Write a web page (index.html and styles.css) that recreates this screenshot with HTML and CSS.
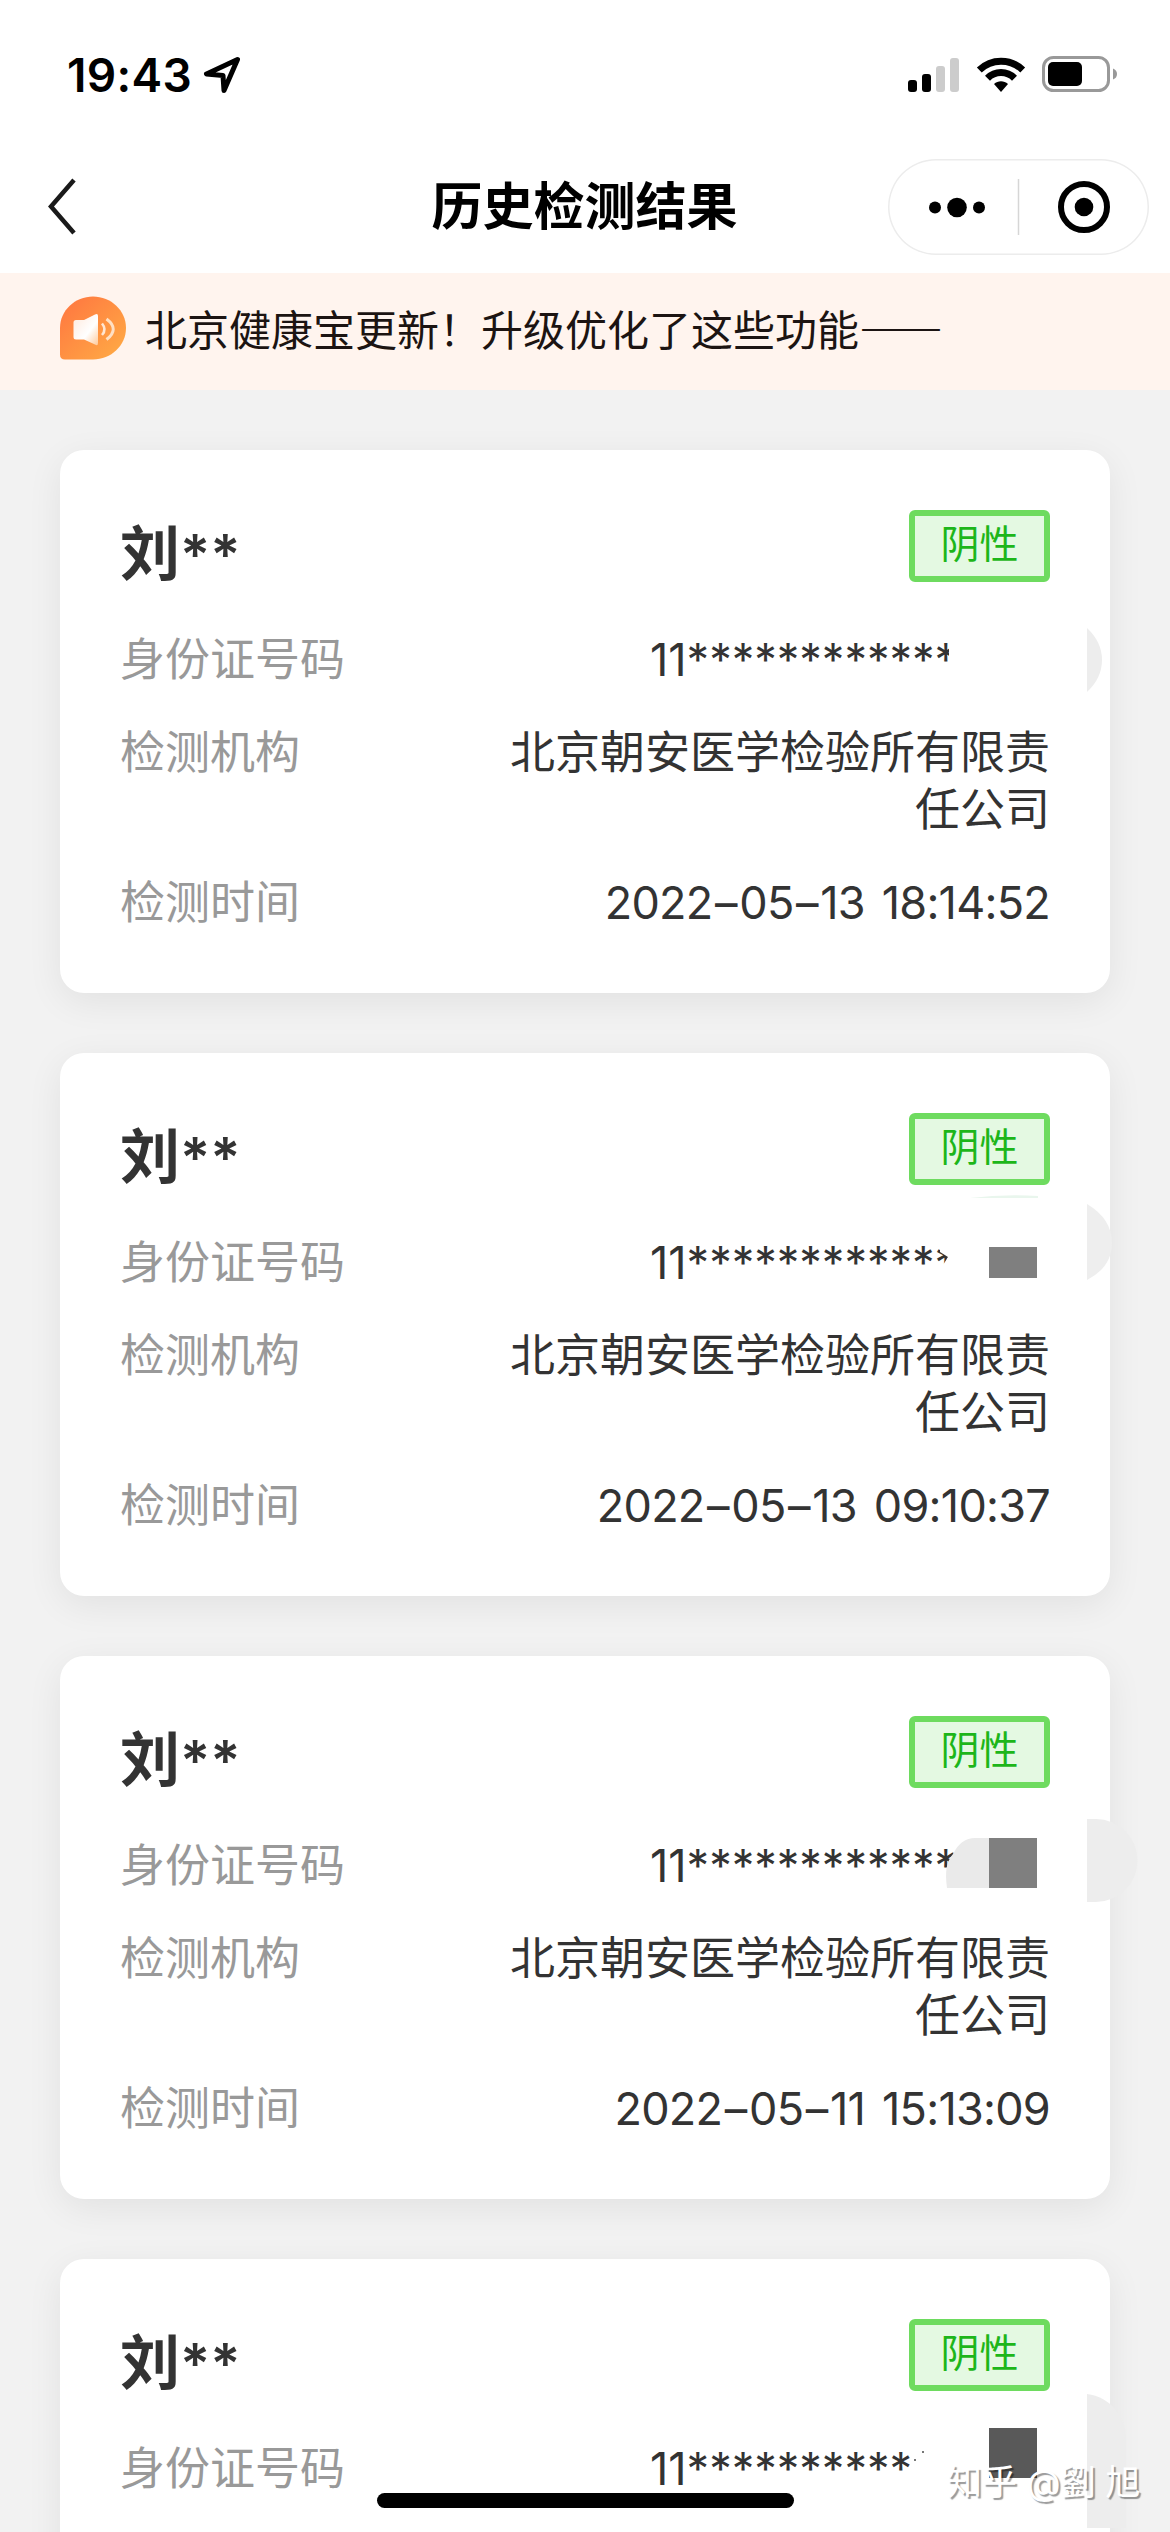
FILE: index.html
```html
<!DOCTYPE html>
<html lang="zh-CN">
<head>
<meta charset="utf-8">
<meta name="viewport" content="width=device-width">
<title>历史检测结果</title>
<link rel="stylesheet" href="styles.css">
</head>
<body>
<div class="screen">
  <div class="statusbar">
    <span class="clock">19:43</span>
    <svg class="location" width="38" height="38" viewBox="0 0 38 38"><path d="M34.5 3.5 L3.5 18 L20 19.5 L21 34.5 Z" fill="none" stroke="#000" stroke-width="5" stroke-linejoin="round"/></svg>
    <svg class="signal" width="52" height="36" viewBox="0 0 52 36"><rect x="0" y="23" width="9" height="12" rx="3"/><rect x="14" y="17" width="9" height="18" rx="3"/><rect x="28" y="9" width="9" height="26" rx="3" fill="#ccc"/><rect x="42" y="1" width="9" height="34" rx="3" fill="#ccc"/></svg>
    <svg class="wifi" width="50" height="38" viewBox="0 0 50 38"><g fill="none" stroke="#000" stroke-width="7"><path d="M3.3 14 C15.500 2.300 34.500 2.300 46.700 14"/><path d="M11.500 22.200 C19 14.600 31 14.600 38.500 22.200"/></g><path d="M18 28 C22 24.300 28 24.300 32 28 L25 36Z"/></svg>
    <svg class="battery" width="76" height="38" viewBox="0 0 76 38"><rect x="1.500" y="1.500" width="65" height="33" rx="10" fill="none" stroke="#999" stroke-width="3"/><rect x="6" y="6" width="34" height="24" rx="5"/><path d="M71 12.500 Q75 14 75 18 Q75 22 71 23.500Z" fill="#999"/></svg>
  </div>
  <header class="navbar">
    <svg class="back" width="30" height="58" viewBox="0 0 30 58"><path d="M26 2 L3 28.500 L26 55" fill="none" stroke="#1a1a1a" stroke-width="4.500"/></svg>
    <h1>历史检测结果</h1>
    <div class="capsule">
      <svg width="261" height="96" viewBox="0 0 261 96"><circle cx="47" cy="48.500" r="6"/><circle cx="69" cy="48.500" r="9.800"/><circle cx="91" cy="48.500" r="6"/><path d="M130.500 20v56" stroke="#d6d6d6" stroke-width="1.500"/><circle cx="196" cy="48" r="23" fill="none" stroke="#000" stroke-width="6"/><circle cx="196" cy="48" r="9.300"/></svg>
    </div>
  </header>
  <div class="notice">
    <svg width="66" height="64" viewBox="0 0 66 64"><defs><linearGradient id="orange" x1="0" y1="0" x2="1" y2="1"><stop offset="0" stop-color="#ff7440"/><stop offset="1" stop-color="#ffad45"/></linearGradient><linearGradient id="cone" x1="0" y1="0" x2="1" y2="1"><stop offset="0" stop-color="#ffe9dc"/><stop offset=".6" stop-color="#fff"/><stop offset="1" stop-color="#ffc999"/></linearGradient></defs><path d="M33 .500C51 .500 66 14.500 66 32S51 63.500 33 63.500H5Q0 63.500 0 58.500V32C0 14.500 15 .500 33 .500Z" fill="url(#orange)"/><path d="M16 24h8L35 18.500Q38 17 38 20V47Q38 50.500 35 48.500L24 43.500H16Q13.500 43.500 13.500 41V26.500Q13.500 24 16 24Z" fill="url(#cone)"/><path d="M42 27.500Q47 33.500 42 39" fill="none" stroke="#ffe6d2" stroke-width="2.600"/><path d="M46.500 23Q60 33 46.500 43.500" fill="none" stroke="#ffe0c4" stroke-width="3"/></svg>
    <p>北京健康宝更新！升级优化了这些功能<b>——</b></p>
  </div>
  <main class="list">
    <article class="card">
      <div class="head"><h2>刘<span class="stars">**</span></h2><span class="badge">阴性</span></div>
      <dl>
        <div class="row"><dt>身份证号码</dt><dd class="idno">11************</dd></div>
        <div class="row"><dt>检测机构</dt><dd>北京朝安医学检验所有限责任公司</dd></div>
        <div class="row"><dt>检测时间</dt><dd class="time">2022<i>–</i>05<i>–</i>13 18:14:52</dd></div>
      </dl>
      <svg class="marks" viewBox="0 0 1110 543"><path d="M889 180h30v50h-30Z" fill="#fff"/><path d="M1027 178Q1042 192 1042 210T1027 242Z" fill="#ededed"/></svg>
    </article>
    <article class="card">
      <div class="head"><h2>刘<span class="stars">**</span></h2><span class="badge">阴性</span></div>
      <dl>
        <div class="row"><dt>身份证号码</dt><dd class="idno">11************</dd></div>
        <div class="row"><dt>检测机构</dt><dd>北京朝安医学检验所有限责任公司</dd></div>
        <div class="row"><dt>检测时间</dt><dd class="time">2022<i>–</i>05<i>–</i>13 09:10:37</dd></div>
      </dl>
      <svg class="marks" viewBox="0 0 1110 543"><path d="M880 186h39v44h-36V212l5-8-8-5Z" fill="#fff"/><path d="M910 145Q943 141 978 143V145Z" fill="#e9f6ed"/><path d="M929 194h48v31h-48Z" fill="#7f7f7f"/><path d="M1027 151Q1052 166 1052 190T1027 227Z" fill="#eee"/></svg>
    </article>
    <article class="card">
      <div class="head"><h2>刘<span class="stars">**</span></h2><span class="badge">阴性</span></div>
      <dl>
        <div class="row"><dt>身份证号码</dt><dd class="idno">11************</dd></div>
        <div class="row"><dt>检测机构</dt><dd>北京朝安医学检验所有限责任公司</dd></div>
        <div class="row"><dt>检测时间</dt><dd class="time">2022<i>–</i>05<i>–</i>11 15:13:09</dd></div>
      </dl>
      <svg class="marks" viewBox="0 0 1110 543"><path d="M887 232C885 216 886 206 893 198Q901 182 915 182H929V232Z" fill="#eaeaea"/><path d="M929 182h48v50h-48Z" fill="#7f7f7f"/><path d="M1027 163h9a41.500 41.500 0 0 1 0 83h-9Z" fill="#ededed"/></svg>
    </article>
    <article class="card">
      <div class="head"><h2>刘<span class="stars">**</span></h2><span class="badge">阴性</span></div>
      <dl>
        <div class="row"><dt>身份证号码</dt><dd class="idno">11***********</dd></div>
        <div class="row"><dt>检测机构</dt><dd>北京朝安医学检验所有限责任公司</dd></div>
        <div class="row"><dt>检测时间</dt><dd class="time">2022<i>–</i>05<i>–</i>11 09:10:37</dd></div>
      </dl>
      <svg class="marks" viewBox="0 0 1110 543"><path d="M854 180h50v50h-50Z" fill="#fff"/><path d="M862 192h2v2h-2ZM854 200h2v2h-2Z" fill="#777"/><path d="M929 169h48v50h-48Z" fill="#595959"/><path d="M1027 135C1050 138 1066 157 1066 180V269H1027Z" fill="#ededed"/></svg>
    </article>
  </main>
  <div class="home-indicator"></div>
  <div class="watermark">知乎 @劉 旭</div>
</div>
</body>
</html>
```
FILE: styles.css
```css
* { box-sizing: border-box; margin: 0; padding: 0; }
body {
  background: #f2f2f2;
  color: #333;
  font-family: Inter, "Noto Sans CJK SC", sans-serif;
}
svg { display: block; flex: none; }
.screen { position: relative; width: 1170px; height: 2532px; overflow: hidden; }

.statusbar {
  display: flex;
  align-items: center;
  height: 150px;
  padding: 0 52px 0 67px;
  background: #fff;
  color: #000;
}
.clock { width: 136px; font-size: 46px; font-weight: 600; line-height: 60px; letter-spacing: .3px; }
.signal { margin-left: auto; margin-right: 16px; }
.wifi { margin-right: 16px; }

.navbar {
  display: flex;
  align-items: center;
  height: 123px;
  padding: 0 21px 9px 48px;
  background: #fff;
}
.navbar h1 {
  flex: 1;
  padding-left: 203px;
  color: #000;
  font-size: 51px;
  font-weight: 600;
  line-height: 72px;
  text-align: center;
  white-space: nowrap;
}
.capsule { width: 261px; height: 96px; border-radius: 48px; box-shadow: inset 0 0 0 1.5px #ececec; }

.notice {
  display: flex;
  align-items: center;
  gap: 19px;
  height: 117px;
  padding: 0 60px 7px;
  background: #fff4ee;
  color: #1c1412;
}
.notice p { font-family: "Noto Sans CJK SC", sans-serif; font-size: 42px; line-height: 60px; white-space: nowrap; }

.list { display: flex; flex-direction: column; gap: 60px; padding: 60px; }
.card {
  position: relative;
  flex: none;
  height: 543px;
  padding: 60px 60px 0;
  border-radius: 24px;
  background: #fff;
  box-shadow: 0 9px 36px rgba(0, 0, 0, .07);
}
.head { display: flex; justify-content: space-between; height: 121px; }
.head h2 { display: flex; font-size: 60px; font-weight: 600; line-height: 89px; }
.stars { font-size: 56px; line-height: 91px; }
.badge {
  width: 141px;
  height: 72px;
  border: 6px solid #6edb5f;
  border-radius: 6px;
  background: #e4f9e2;
  color: #1db61a;
  font-size: 39px;
  line-height: 55px;
  text-align: center;
}
dl { display: flex; flex-direction: column; gap: 36px; }
.row { display: flex; justify-content: space-between; font-size: 45px; line-height: 57px; }
dt { color: #999; }
dd { width: 542px; text-align: right; }
.idno { flex: none; width: 400px; text-align: left; white-space: nowrap; }
.time { letter-spacing: -.75px; word-spacing: 5px; white-space: nowrap; }
.time i { margin: 0 2.500px; font-style: normal; }
.marks { position: absolute; left: 0; top: 0; width: 1110px; height: 543px; pointer-events: none; }

.home-indicator {
  position: absolute;
  left: 377px;
  top: 2493px;
  width: 417px;
  height: 15px;
  border-radius: 8px;
  background: #000;
}
.watermark {
  position: absolute;
  left: 947px;
  top: 2458px;
  color: #fff;
  font-size: 35px;
  line-height: 48px;
  white-space: nowrap;
  text-shadow: 2px 2px 1px rgba(0, 0, 0, .4);
}
```
